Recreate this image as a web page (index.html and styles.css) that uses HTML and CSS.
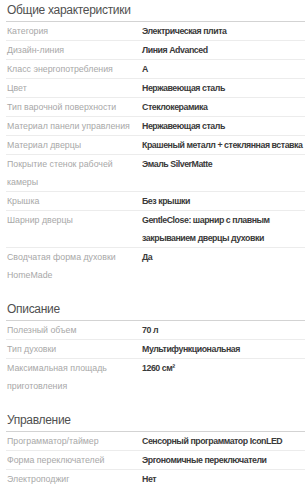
FILE: index.html
```html
<!DOCTYPE html>
<html lang="ru">
<head>
<meta charset="utf-8">
<link rel="stylesheet" href="styles.css">
</head>
<body>
<div class="specs">
  <section class="group">
    <h3 class="group-title">Общие характеристики</h3>
    <div class="row"><div class="label">Категория</div><div class="value">Электрическая плита</div></div>
    <div class="row"><div class="label">Дизайн-линия</div><div class="value">Линия Advanced</div></div>
    <div class="row"><div class="label">Класс энергопотребления</div><div class="value">A</div></div>
    <div class="row"><div class="label">Цвет</div><div class="value">Нержавеющая сталь</div></div>
    <div class="row"><div class="label">Тип варочной поверхности</div><div class="value">Стеклокерамика</div></div>
    <div class="row"><div class="label">Материал панели управления</div><div class="value">Нержавеющая сталь</div></div>
    <div class="row"><div class="label">Материал дверцы</div><div class="value">Крашеный металл + стеклянная вставка</div></div>
    <div class="row"><div class="label">Покрытие стенок рабочей камеры</div><div class="value">Эмаль SilverMatte</div></div>
    <div class="row"><div class="label">Крышка</div><div class="value">Без крышки</div></div>
    <div class="row"><div class="label">Шарнир дверцы</div><div class="value">GentleClose: шарнир с плавным закрыванием дверцы духовки</div></div>
    <div class="row"><div class="label">Сводчатая форма духовки HomeMade</div><div class="value">Да</div></div>
  </section>
  <section class="group">
    <h3 class="group-title">Описание</h3>
    <div class="row"><div class="label">Полезный объем</div><div class="value">70 л</div></div>
    <div class="row"><div class="label">Тип духовки</div><div class="value">Мультифункциональная</div></div>
    <div class="row"><div class="label">Максимальная площадь приготовления</div><div class="value">1260 см²</div></div>
  </section>
  <section class="group">
    <h3 class="group-title">Управление</h3>
    <div class="row"><div class="label">Программатор/таймер</div><div class="value">Сенсорный программатор IconLED</div></div>
    <div class="row"><div class="label">Форма переключателей</div><div class="value">Эргономичные переключатели</div></div>
    <div class="row"><div class="label">Электроподжиг</div><div class="value">Нет</div></div>
  </section>
</div>
</body>
</html>
```

FILE: styles.css
```css
html, body {
  margin: 0;
  padding: 0;
  background: #ffffff;
}

body {
  font-family: "Liberation Sans", Arial, sans-serif;
  overflow: hidden;
}

.specs {
  width: 308px;
  padding-left: 6px;
}

.group + .group {
  margin-top: 15px;
}

.group-title {
  margin: 0;
  padding-left: 1px;
  padding-bottom: 1px;
  font-size: 12px;
  line-height: 20px;
  letter-spacing: -0.3px;
  font-weight: normal;
  color: #505050;
  border-bottom: 1px solid #d3d3d3;
}

.row {
  display: grid;
  grid-template-columns: 136px 1fr;
  border-bottom: 1px solid #ececec;
  font-size: 8.8px;
  line-height: 18px;
}

.row:last-child {
  border-bottom: none;
}

.label {
  padding-left: 1px;
  padding-right: 6px;
  color: #a8a8a8;
}

.value {
  font-weight: bold;
  letter-spacing: -0.45px;
  color: #3a3a3a;
}
```
